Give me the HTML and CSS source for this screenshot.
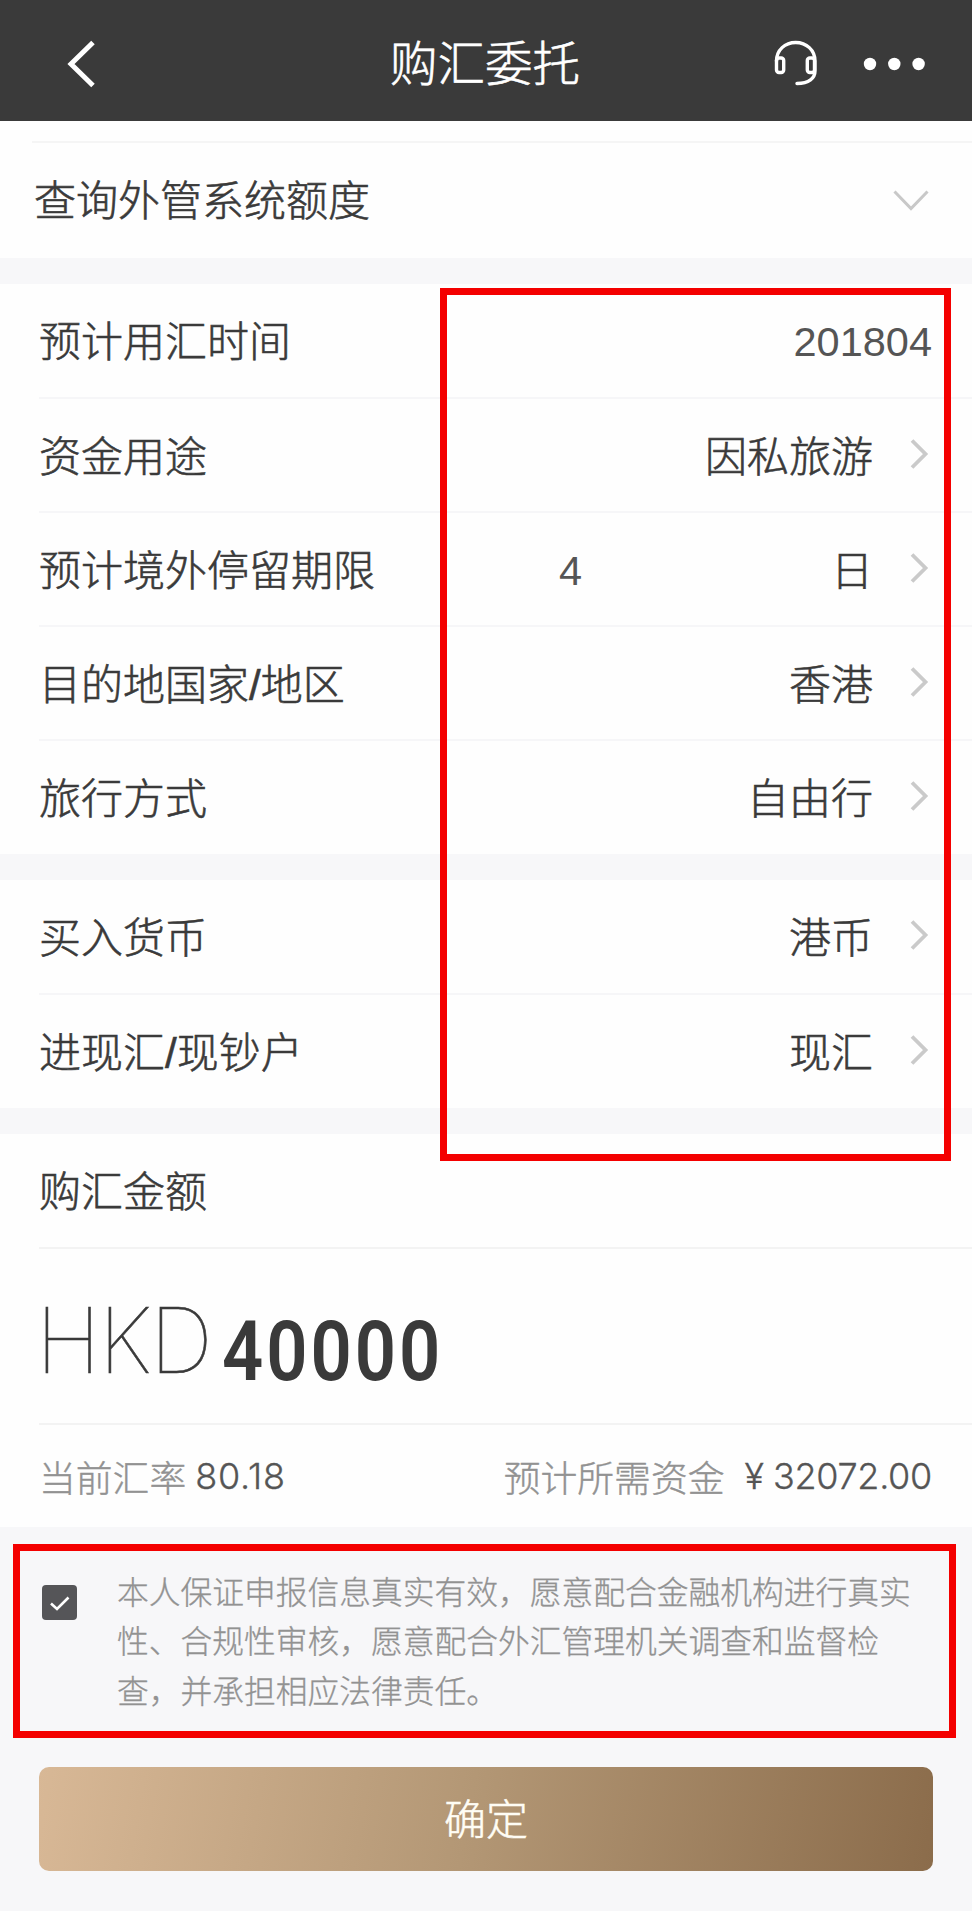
FILE: index.html
```html
<!DOCTYPE html>
<html lang="zh-CN">
<head>
<meta charset="utf-8">
<title>购汇委托</title>
<link rel="stylesheet" href="styles.css">
</head>
<body>
<svg class="defs" width="0" height="0"><defs><symbol id="next" viewBox="0 0 20 32"><path d="M3 2.500L16.500 16 3 29.500" fill="none" stroke="#cacaca" stroke-width="3.800"/></symbol></defs></svg>
<main class="screen">
  <header class="header">
    <svg class="back" width="32" height="50" viewBox="0 0 32 50"><path d="M28 3.500L6 25 28 46.500" fill="none" stroke="#fff" stroke-width="5"/></svg>
    <h1 class="title">购汇委托</h1>
    <svg class="headset" width="46" height="48" viewBox="0 0 46 48" fill="none" stroke="#fff" stroke-width="3.400" stroke-linecap="round"><path d="M3.500 21C3.500 10 12 2.500 22.700 2.500S42 10 42 21v10C42 38 36 43.500 24 43.500"/><rect x="3.500" y="18" width="7.200" height="14.500" rx="2.500"/><rect x="34.300" y="18" width="7.200" height="14.500" rx="2.500"/></svg>
    <svg class="more" width="64" height="14" viewBox="0 0 64 14" fill="#fff"><circle cx="7" cy="7" r="6.200"/><circle cx="31.300" cy="7" r="6.200"/><circle cx="55.600" cy="7" r="6.200"/></svg>
  </header>
  <section class="query">
    <span class="label">查询外管系统额度</span>
    <svg width="38" height="24" viewBox="0 0 38 24"><path d="M2.500 2.500L19 19.500 35.500 2.500" fill="none" stroke="#c8c8c8" stroke-width="3"/></svg>
  </section>
  <section class="group">
    <div class="row"><span class="label">预计用汇时间</span><span class="number date">201804</span></div>
    <div class="row"><span class="label">资金用途</span><span class="value">因私旅游</span><svg class="next"><use href="#next"/></svg></div>
    <div class="row"><span class="label">预计境外停留期限</span><span class="number days">4</span><span class="value">日</span><svg class="next"><use href="#next"/></svg></div>
    <div class="row"><span class="label">目的地国家/地区</span><span class="value">香港</span><svg class="next"><use href="#next"/></svg></div>
    <div class="row"><span class="label">旅行方式</span><span class="value">自由行</span><svg class="next"><use href="#next"/></svg></div>
  </section>
  <section class="group">
    <div class="row"><span class="label">买入货币</span><span class="value">港币</span><svg class="next"><use href="#next"/></svg></div>
    <div class="row"><span class="label">进现汇/现钞户</span><span class="value">现汇</span><svg class="next"><use href="#next"/></svg></div>
  </section>
  <section class="group">
    <div class="row only"><span class="label">购汇金额</span></div>
    <div class="amount"><span class="currency">HKD</span><span class="sum">40000</span></div>
    <div class="rate"><span class="note">当前汇率</span><span class="figure rate-value">80.18</span><span class="note need">预计所需资金</span><span class="figure yen">¥</span><span class="figure total">32072.00</span></div>
  </section>
  <section class="agree">
    <svg class="check" width="35" height="35" viewBox="0 0 35 35"><rect width="35" height="35" rx="4" fill="#555558"/><path d="M9 18.500l6 5.500L26.500 12.500" fill="none" stroke="#fff" stroke-width="2.600"/></svg>
    <p class="terms">本人保证申报信息真实有效，愿意配合金融机构进行真实<br>性、合规性审核，愿意配合外汇管理机关调查和监督检<br>查，并承担相应法律责任。</p>
  </section>
  <button class="submit">确定</button>
  <div class="mark mark-form"></div>
  <div class="mark mark-agree"></div>
</main>
</body>
</html>
```
FILE: styles.css
```css
* { box-sizing: border-box; }
body { margin: 0; background: #f7f7f9; font-family: "Noto Sans CJK SC", sans-serif; font-weight: 300; color: #3a3a3a; }
.defs { position: absolute; }
.screen { position: relative; width: 972px; height: 1911px; overflow: hidden; background: #f7f7f9; }
.header { display: flex; align-items: center; height: 121px; padding: 6px 45px 0 65px; background: #3a3a3a; }
.title { flex: 1; margin: -5px 0 0; padding-left: 293px; font-size: 47.500px; line-height: 70px; font-weight: 300; color: #fff; -webkit-text-stroke: .6px; }
.headset { margin-right: 44px; }
.query { display: flex; align-items: center; justify-content: space-between; height: 137px; padding: 22px 42px 0 34px; background: linear-gradient(#f5f5f5, #f5f5f5) 32px 20px / 100% 2px no-repeat #fefefe; }
.label, .value { padding-top: 7px; font-family: "Liberation Sans", "Noto Sans CJK SC", sans-serif; font-size: 42px; line-height: 60px; white-space: nowrap; -webkit-text-stroke: .6px; }
.query .label { margin-top: -5px; }
.group { margin-top: 26px; background: #fefefe; }
.row { display: flex; align-items: center; height: 114px; margin-left: 39px; padding: 0 43px 2px 0; border-bottom: 2px solid #f6f6f8; }
.row:first-child { height: 115px; }
.row:last-child { height: 113px; border-bottom: 0; }
.row.only { height: 115px; border-bottom: 2px solid #f3f3f3; }
.value { margin-left: auto; }
.next { width: 20px; height: 32px; margin: 0 0 1px 36px; }
.number { font: 41.500px "Liberation Sans", sans-serif; color: #555; padding-top: 5px; }
.date { margin-left: auto; margin-right: -3px; }
.days { margin-left: 184px; }
.amount { display: flex; align-items: flex-start; height: 176px; margin-left: 39px; border-bottom: 2px solid #f3f3f3; }
.currency { width: 183px; padding-top: 36px; font: 100 90.500px/110px Inter, sans-serif; letter-spacing: -1.500px; transform: scaleX(.97); transform-origin: left; margin-left: -3px; -webkit-text-stroke: .6px; }
.sum { font: 600 84px/100px Roboto, sans-serif; padding-top: 53px; margin-left: 3px; letter-spacing: 3.500px; transform: scaleX(.86); transform-origin: left; }
.rate { display: flex; align-items: center; height: 102px; padding: 0 40px 0 39px; }
.note { font-size: 36.800px; line-height: 54px; color: #929292; -webkit-text-stroke: .4px; }
.figure { font: 350 36px Inter, sans-serif; color: #555; -webkit-text-stroke: .3px; }
.rate-value { margin-left: 9px; letter-spacing: .8px; }
.need { margin-left: auto; }
.yen { margin-left: 20px; }
.total { margin-left: 9px; letter-spacing: -.3px; }
.agree { display: flex; align-items: flex-start; height: 240px; padding: 58px 0 0 42px; }
.terms { margin: -19px 0 0 40px; font-size: 31.750px; line-height: 49.300px; color: #929292; white-space: nowrap; -webkit-text-stroke: .3px; }
.submit { display: block; width: 894px; height: 104px; margin-left: 39px; padding: 0 0 4px; border: 0; border-radius: 10px; background: linear-gradient(100deg, #d8b896, #b39775 48%, #8b6c4b); color: #fffdf5; font: 300 42px/100px "Noto Sans CJK SC", sans-serif; -webkit-text-stroke: .5px; }
.mark { position: absolute; border: 7px solid #f40000; }
.mark-form { left: 440px; top: 288px; width: 511px; height: 873px; }
.mark-agree { left: 13px; top: 1544px; width: 943px; height: 194px; }
```
